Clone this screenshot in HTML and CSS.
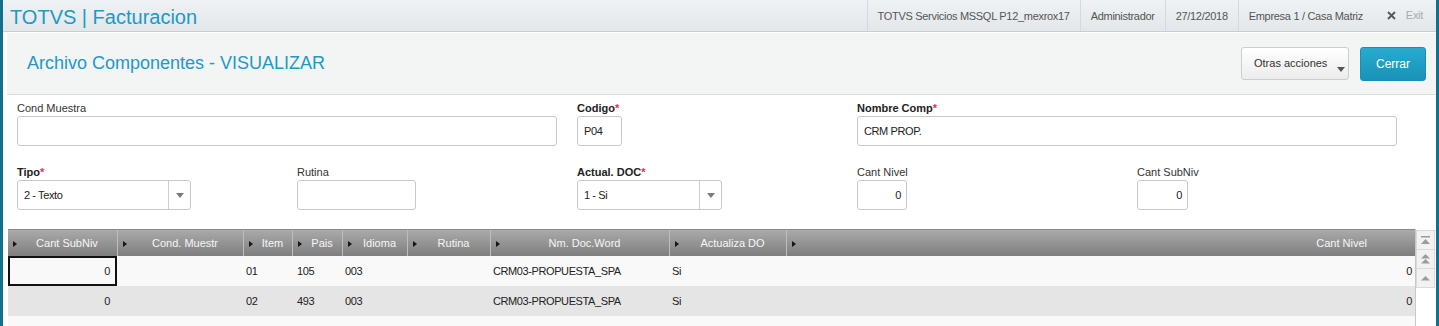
FILE: index.html
```html
<!DOCTYPE html>
<html lang="es">

<head>
    <meta charset="UTF-8">
    <meta name="viewport" content="width=device-width, initial-scale=1.0">
    <title>TOTVS | Facturacion</title>
    <link rel="stylesheet" href="styles.css">
</head>

<body>
    <div class="app">
        <header class="topbar">
            <div class="brand">TOTVS | Facturacion</div>
            <ul class="session">
                <li>TOTVS Servicios MSSQL P12_mexrox17</li>
                <li>Administrador</li>
                <li>27/12/2018</li>
                <li>Empresa 1 / Casa Matriz</li>
                <li class="exit">
                    <svg class="x-icon" width="9" height="9" viewBox="0 0 9 9">
                        <path d="M1 1 L8 8 M8 1 L1 8" stroke="#555" stroke-width="1.8" fill="none" />
                    </svg>
                    Exit
                </li>
            </ul>
        </header>

        <main class="content">
            <div class="panel">
                <h1>Archivo Componentes - VISUALIZAR</h1>
                <div class="actions">
                    <button class="btn btn-more">Otras acciones<span class="caret"></span></button>
                    <button class="btn btn-primary">Cerrar</button>
                </div>
            </div>

            <form class="form">
                <div class="field span2">
                    <label>Cond Muestra</label>
                    <div class="input"></div>
                </div>
                <div class="field req">
                    <label>Codigo<span class="star">*</span></label>
                    <div class="input w-codigo">P04</div>
                </div>
                <div class="field req span2">
                    <label>Nombre Comp<span class="star">*</span></label>
                    <div class="input">CRM PROP.</div>
                </div>

                <div class="field req">
                    <label>Tipo<span class="star">*</span></label>
                    <div class="input select w-tipo">2 - Texto<span class="arrow"></span></div>
                </div>
                <div class="field">
                    <label>Rutina</label>
                    <div class="input w-rutina"></div>
                </div>
                <div class="field req">
                    <label>Actual. DOC<span class="star">*</span></label>
                    <div class="input select w-actual">1 - Si<span class="arrow"></span></div>
                </div>
                <div class="field">
                    <label>Cant Nivel</label>
                    <div class="input num w-num">0</div>
                </div>
                <div class="field">
                    <label>Cant SubNiv</label>
                    <div class="input num w-num2">0</div>
                </div>
            </form>

            <div class="browse">
                <div class="grid">
                    <div class="thead">
                        <div class="th"><span>Cant SubNiv</span></div>
                        <div class="th"><span>Cond. Muestr</span></div>
                        <div class="th"><span>Item</span></div>
                        <div class="th"><span>Pais</span></div>
                        <div class="th"><span>Idioma</span></div>
                        <div class="th"><span>Rutina</span></div>
                        <div class="th"><span>Nm. Doc.Word</span></div>
                        <div class="th"><span>Actualiza DO</span></div>
                        <div class="th last"><span>Cant Nivel</span></div>
                    </div>
                    <div class="row">
                        <div class="td r first sel">0</div>
                        <div class="td"></div>
                        <div class="td">01</div>
                        <div class="td pais">105</div>
                        <div class="td">003</div>
                        <div class="td"></div>
                        <div class="td">CRM03-PROPUESTA_SPA</div>
                        <div class="td">Si</div>
                        <div class="td r">0</div>
                    </div>
                    <div class="row alt">
                        <div class="td r first">0</div>
                        <div class="td"></div>
                        <div class="td">02</div>
                        <div class="td pais">493</div>
                        <div class="td">003</div>
                        <div class="td"></div>
                        <div class="td">CRM03-PROPUESTA_SPA</div>
                        <div class="td">Si</div>
                        <div class="td r">0</div>
                    </div>
                    <div class="row"></div>
                </div>

                <div class="scroller">
                    <div class="sb">
                        <svg width="9" height="9" viewBox="0 0 9 9">
                            <rect x="0" y="0" width="9" height="1.5" fill="#9c9c9c" />
                            <polygon points="4.5,3 9,8 0,8" fill="#9c9c9c" />
                        </svg>
                    </div>
                    <div class="sb">
                        <svg width="9" height="10" viewBox="0 0 9 10">
                            <polygon points="4.5,0 9,4.5 0,4.5" fill="#9c9c9c" />
                            <polygon points="4.5,5 9,9.5 0,9.5" fill="#9c9c9c" />
                        </svg>
                    </div>
                    <div class="sb">
                        <svg width="9" height="5" viewBox="0 0 9 5">
                            <polygon points="4.5,0 9,4.5 0,4.5" fill="#9c9c9c" />
                        </svg>
                    </div>
                </div>
            </div>
        </main>
    </div>
</body>

</html>
```

FILE: styles.css
```css
* {
    box-sizing: border-box;
}

body {
    margin: 0;
    background: #fff;
    font-family: "Liberation Sans", Arial, sans-serif;
    color: #333;
}

:root {
    --teal: #13708c;
    --blue: #1d9ac6;
    --cols: 109px 126px 49px 50px 65px 83px 179px 117px 1fr;
}

.app {
    height: 326px;
    overflow: hidden;
    border-left: 3px solid var(--teal);
    border-right: 3px solid var(--teal);
}

/* top bar */
.topbar {
    display: flex;
    height: 32px;
    border-bottom: 1px solid #c6ced4;
    background: linear-gradient(#eff2f4, #e3e7ea);
}

.brand {
    padding: 3px 0 0 7px;
    font-size: 20px;
    line-height: 28px;
    color: var(--blue);
}

.session {
    display: flex;
    list-style: none;
    margin: 0 0 0 auto;
    padding: 0;
}

.session li {
    border-left: 1px solid #d3d9dd;
    padding: 2px 10px 0;
    line-height: 29px;
    font-size: 11px;
    letter-spacing: -0.3px;
    color: #555;
    white-space: nowrap;
}

.session .exit {
    display: flex;
    align-items: center;
    gap: 10px;
    padding: 0 13px 0 14px;
    color: #aaa;
    border-left: 0;
}

/* title panel */
.content {
    padding: 1px 0 0 4px;
}

.panel {
    display: flex;
    align-items: center;
    height: 62px;
    padding: 0 10px 0 20px;
    border-bottom: 1px solid #dcdcdc;
    background: #f3f4f4;
}

.panel h1 {
    margin: 0;
    font-size: 18px;
    font-weight: normal;
    color: var(--blue);
}

.actions {
    display: flex;
    align-items: center;
    gap: 11px;
    margin-left: auto;
}

.btn {
    height: 33px;
    border-radius: 3px;
    font-family: inherit;
    cursor: pointer;
}

.btn-more {
    position: relative;
    width: 108px;
    padding: 0 0 2px 12px;
    text-align: left;
    border: 1px solid #cdcdcd;
    background: linear-gradient(#ffffff, #ececec);
    font-size: 11px;
    color: #333;
}

.caret {
    position: absolute;
    right: 3px;
    bottom: 7px;
    border-top: 5px solid #555;
    border-left: 4px solid transparent;
    border-right: 4px solid transparent;
}

.btn-primary {
    width: 66px;
    height: 34px;
    border: 1px solid #1a8fb2;
    background: linear-gradient(#27abd1, #1992b7);
    font-size: 12px;
    color: #fff;
}

/* form */
.form {
    display: grid;
    grid-template-columns: repeat(5, 260px);
    column-gap: 20px;
    row-gap: 20px;
    padding: 7px 0 0 10px;
}

.span2 {
    grid-column: span 2;
}

.field label {
    display: block;
    margin-bottom: 1px;
    font-size: 11px;
    line-height: 13px;
    color: #333;
}

.field.req label {
    font-weight: bold;
    color: #222;
}

.star {
    color: #e6304f;
}

.input {
    display: flex;
    align-items: center;
    height: 30px;
    padding: 0 6px;
    border: 1px solid #c8c8c8;
    border-radius: 3px;
    background: #fff;
    font-size: 11px;
    letter-spacing: -0.4px;
    color: #222;
}

.num {
    justify-content: flex-end;
    padding-right: 5px;
}

.select {
    padding-right: 0;
}

.arrow {
    display: flex;
    align-items: center;
    justify-content: center;
    align-self: stretch;
    width: 22px;
    margin-left: auto;
    border-left: 1px solid #cfcfcf;
}

.arrow::after {
    content: "";
    border-top: 5px solid #7a7a7a;
    border-left: 4px solid transparent;
    border-right: 4px solid transparent;
}

.w-codigo { width: 45px; }
.w-tipo { width: 174px; }
.w-rutina { width: 119px; }
.w-actual { width: 145px; }
.w-num { width: 50px; }
.w-num2 { width: 51px; }

/* browse grid */
.browse {
    display: flex;
    margin: 19px 0 0 1px;
}

.grid {
    flex: 1;
    border-right: 1px solid #c8c8c8;
}

.thead,
.row {
    display: grid;
    grid-template-columns: var(--cols);
}

.thead {
    height: 27px;
    border-top: 1px solid #8a8a8a;
    background: linear-gradient(#aaaaaa, #7e7e7e);
    font-size: 11px;
    color: #f6f6f6;
}

.th {
    display: flex;
    align-items: center;
    padding-left: 5px;
    border-left: 1px solid #bdbdbd;
    white-space: nowrap;
}

.th:first-child {
    border-left: 0;
}

.th::before {
    content: "";
    border-left: 4px solid #151515;
    border-top: 3px solid transparent;
    border-bottom: 3px solid transparent;
    margin-top: 2px;
}

.th span {
    flex: 1;
    text-align: center;
}

.th.last span {
    text-align: right;
    padding-right: 48px;
}

.row {
    height: 30px;
    background: #f9f9f9;
    font-size: 11px;
    letter-spacing: -0.4px;
    color: #222;
}

.row.alt {
    background: #e5e5e5;
}

.td {
    padding: 0 3px;
    line-height: 30px;
    white-space: nowrap;
    overflow: hidden;
}

.td.r {
    text-align: right;
}

.td.first {
    padding-right: 7px;
}

.td.pais {
    padding-left: 5px;
}

.td.sel {
    box-shadow: inset 0 0 0 2px #111;
}

.scroller {
    width: 19px;
    margin: 1px 1px 0 0;
}

.sb {
    display: flex;
    align-items: center;
    justify-content: center;
    height: 19px;
    border: 1px solid #dadada;
    border-top: 0;
    background: #f2f2f2;
}

.sb:first-child {
    border-top: 1px solid #dadada;
    height: 20px;
}
```
